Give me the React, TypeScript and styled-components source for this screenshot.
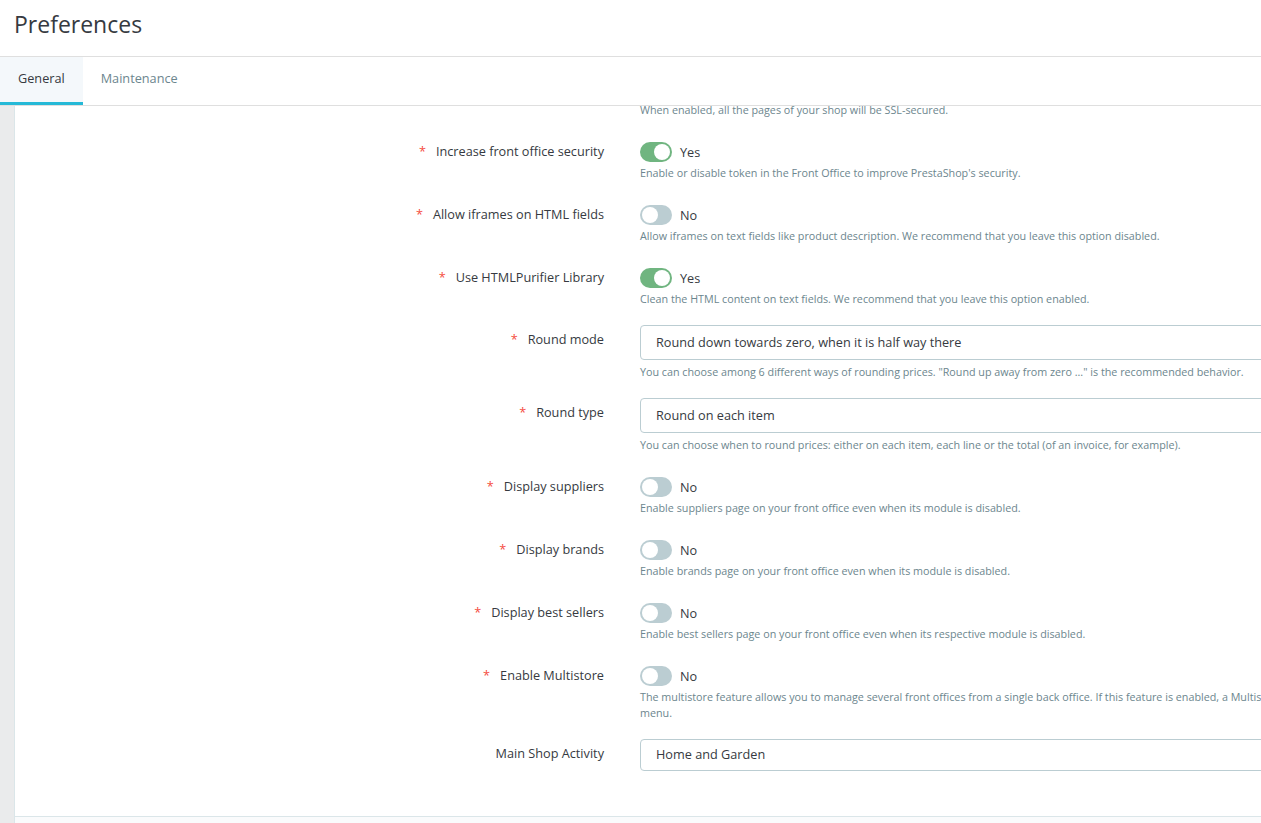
import styled, { createGlobalStyle } from 'styled-components';

const GlobalStyle = createGlobalStyle`
    html, body {
        margin: 0;
        padding: 0;
        background: #fff;
        overflow: hidden;
    }
    body {
        font-family: "Open Sans", "Liberation Sans", sans-serif;
        color: #363a41;
    }
`

const Page = styled.div`
    width: 1261px;
    height: 823px;
    display: flex;
    flex-direction: column;
    overflow: hidden;
`

const Header = styled.div`
    height: 48px;
    border-bottom: 1px solid #dfdfdf;
    display: flex;
    align-items: center;
    padding-left: 14px;
    padding-bottom: 8px;
    flex-shrink: 0;
`

const Title = styled.h1`
    margin: 0;
    font-size: 23px;
    font-weight: 400;
    color: #363a41;
`

const TabBar = styled.div`
    display: flex;
    height: 48px;
    border-bottom: 1px solid #dfdfdf;
    flex-shrink: 0;
`

const Tab = styled.div<{ $active?: boolean }>`
    display: flex;
    align-items: center;
    padding: 0 18px 4px;
    font-size: 12.7px;
    color: ${p => p.$active ? '#363a41' : '#6c868e'};
    background: ${p => p.$active ? '#f4f8fb' : 'transparent'};
    border-bottom: 3px solid ${p => p.$active ? '#25b9d7' : 'transparent'};
`

const Body = styled.div`
    flex: 1;
    display: flex;
    background: #eaebec;
    padding-left: 14px;
`

const Card = styled.div`
    flex: 1;
    display: flex;
    flex-direction: column;
    background: #fff;
    border-left: 1px solid #dbe6e9;
    min-width: 0;
`

const Form = styled.div`
    display: grid;
    grid-template-columns: 625px 972px;
    align-content: start;
    padding-bottom: 27px;
`

const Label = styled.div<{ $select?: boolean }>`
    text-align: right;
    padding-right: 36px;
    padding-top: ${p => p.$select ? '4px' : '5px'};
    font-size: 12.7px;
    line-height: 20px;
    color: #363a41;
    white-space: nowrap;
`

const Required = styled.span`
    color: #f54c3e;
    margin-right: 10px;
`

const Control = styled.div<{ $switch?: boolean }>`
    padding-top: ${p => p.$switch ? '6px' : '0'};
    margin-bottom: 18px;
    display: flex;
    flex-direction: column;
`

const Help = styled.div<{ $gap?: number }>`
    margin-top: ${p => p.$gap ?? 3}px;
    font-size: 10.75px;
    line-height: 16px;
    color: #6c868e;
`

const SwitchRow = styled.div`
    display: flex;
    align-items: center;
    gap: 8px;
    height: 20px;
    font-size: 12.7px;
    color: #363a41;
`

const Track = styled.span<{ $on: boolean }>`
    position: relative;
    display: inline-block;
    width: 32px;
    height: 20px;
    border-radius: 10px;
    background: ${p => p.$on ? '#70b580' : '#bbcdd2'};

    &::after {
        content: '';
        position: absolute;
        top: 2px;
        left: ${p => p.$on ? '14px' : '2px'};
        width: 16px;
        height: 16px;
        border-radius: 50%;
        background: #fff;
    }
`

const Select = styled.div<{ $h?: number }>`
    box-sizing: border-box;
    height: ${p => p.$h ?? 35}px;
    border: 1px solid #bbcdd2;
    border-radius: 4px;
    display: flex;
    align-items: center;
    padding: 0 0 2px 15px;
    font-size: 12.7px;
    color: #363a41;
`

const Footer = styled.div`
    flex: 1;
    background: #fafbfc;
    border-top: 1px solid #dbe6e9;
`

type Row =
    | { kind: 'switch'; label: string; on: boolean; help: string; required?: boolean }
    | { kind: 'select'; label: string; value: string; help?: string; required?: boolean; h?: number }

const rows: Row[] = [
    { kind: 'switch', label: 'Increase front office security', on: true, required: true, help: "Enable or disable token in the Front Office to improve PrestaShop's security." },
    { kind: 'switch', label: 'Allow iframes on HTML fields', on: false, required: true, help: 'Allow iframes on text fields like product description. We recommend that you leave this option disabled.' },
    { kind: 'switch', label: 'Use HTMLPurifier Library', on: true, required: true, help: 'Clean the HTML content on text fields. We recommend that you leave this option enabled.' },
    { kind: 'select', label: 'Round mode', value: 'Round down towards zero, when it is half way there', required: true, help: 'You can choose among 6 different ways of rounding prices. "Round up away from zero ..." is the recommended behavior.' },
    { kind: 'select', label: 'Round type', value: 'Round on each item', required: true, help: 'You can choose when to round prices: either on each item, each line or the total (of an invoice, for example).' },
    { kind: 'switch', label: 'Display suppliers', on: false, required: true, help: 'Enable suppliers page on your front office even when its module is disabled.' },
    { kind: 'switch', label: 'Display brands', on: false, required: true, help: 'Enable brands page on your front office even when its module is disabled.' },
    { kind: 'switch', label: 'Display best sellers', on: false, required: true, help: 'Enable best sellers page on your front office even when its respective module is disabled.' },
    { kind: 'switch', label: 'Enable Multistore', on: false, required: true, help: 'The multistore feature allows you to manage several front offices from a single back office. If this feature is enabled, a Multistore page will be available in the Advanced Parameters > Multistore menu.' },
    { kind: 'select', label: 'Main Shop Activity', value: 'Home and Garden', h: 32 },
]

export default function App() {
    return (
        <Page>
            <GlobalStyle />
            <Header>
                <Title>Preferences</Title>
            </Header>
            <TabBar>
                <Tab $active>General</Tab>
                <Tab>Maintenance</Tab>
            </TabBar>
            <Body>
                <Card>
                    <Form>
                        <Label />
                        <Control>
                            <Help $gap={-4}>When enabled, all the pages of your shop will be SSL-secured.</Help>
                        </Control>
                        {rows.map((row, i) => (
                            <>
                                <Label key={'l' + i} $select={row.kind === 'select'}>
                                    {row.required && <Required>*</Required>}
                                    {row.label}
                                </Label>
                                <Control key={'c' + i} $switch={row.kind === 'switch'}>
                                    {row.kind === 'switch' ? (
                                        <SwitchRow>
                                            <Track $on={row.on} />
                                            {row.on ? 'Yes' : 'No'}
                                        </SwitchRow>
                                    ) : (
                                        <Select $h={row.h}>{row.value}</Select>
                                    )}
                                    {row.help && <Help $gap={row.kind === 'switch' ? 3 : 4}>{row.help}</Help>}
                                </Control>
                            </>
                        ))}
                    </Form>
                    <Footer />
                </Card>
            </Body>
        </Page>
    )
}
